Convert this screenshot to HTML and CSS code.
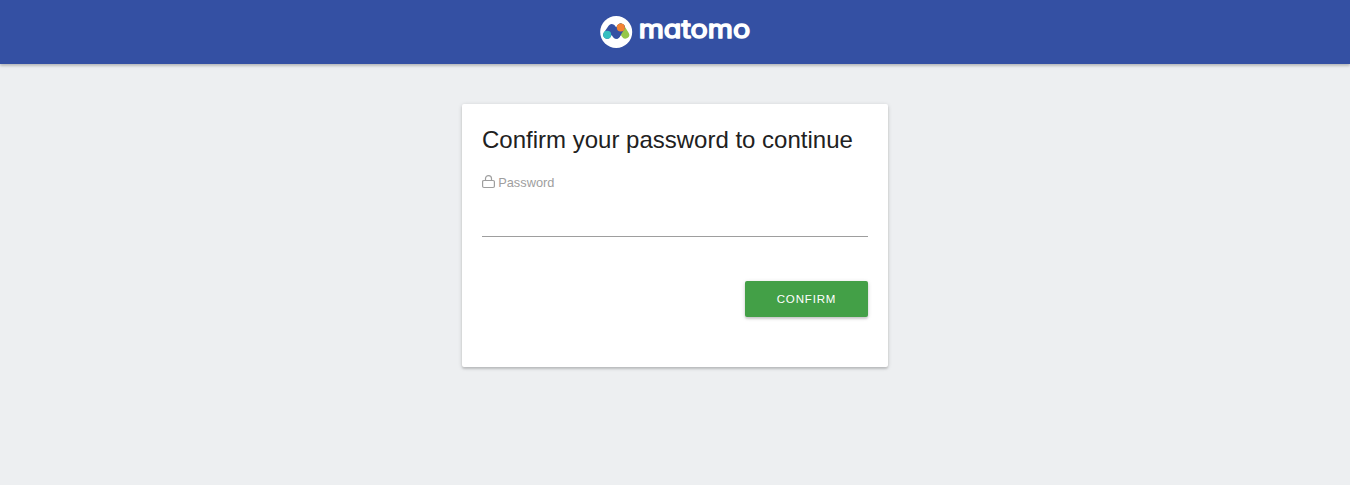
FILE: index.html
```html
<!DOCTYPE html>
<html lang="en">
<head>
<meta charset="utf-8">
<title>Confirm your password - Matomo</title>
<link rel="stylesheet" href="styles.css">
</head>
<body>
<header class="navbar">
  <svg class="logo" viewBox="0 0 152 32" role="img" aria-label="Matomo">
    <circle cx="16.2" cy="16" r="16" fill="#fff"/>
    <path d="M7.2 18.7 L11.8 12 L16.4 18.7 L20.8 11.5" fill="none" stroke="#3450a3" stroke-width="7.8" stroke-linecap="round" stroke-linejoin="round"/>
    <path d="M20.8 11.5 L25.3 18.7" fill="none" stroke="#95c748" stroke-width="7.8" stroke-linecap="round"/>
    <path d="M16.4 18.7 L20.8 11.5" fill="none" stroke="#3450a3" stroke-width="7.8" stroke-linecap="round"/>
    <circle cx="7.2" cy="18.7" r="4" fill="#35bfc0"/>
    <circle cx="20.8" cy="11.5" r="4" fill="#f38334"/>
    <text class="wordmark" x="38.7" y="21.9" textLength="111.6" lengthAdjust="spacingAndGlyphs">matomo</text>
  </svg>
</header>
<main class="content">
  <form class="card">
    <h1 class="card-title">Confirm your password to continue</h1>
    <label class="field-label" for="password">
      <svg class="lock" viewBox="0 0 13 14"><path d="M2 5.5 H11 Q12.4 5.5 12.4 6.7 V11.3 Q12.4 12.5 11 12.5 H2 Q.6 12.5 .6 11.3 V6.7 Q.6 5.5 2 5.5 Z M3.5 5.5 V3.6 A3 3 0 0 1 9.5 3.6 V5.5"/></svg>
      <span>Password</span>
    </label>
    <input class="field-input" id="password" type="password">
    <div class="actions"><button class="submit" type="button">CONFIRM</button></div>
  </form>
</main>
</body>
</html>
```
FILE: styles.css
```css
* { box-sizing: border-box; }
body {
  margin: 0;
  min-height: 485px;
  background: #edeff1;
  font-family: "Liberation Sans", Arial, sans-serif;
  color: #212121;
}
.navbar {
  height: 64px;
  display: flex;
  justify-content: center;
  padding-top: 16px;
  background: #3450a3;
  box-shadow: 0 2px 2px 0 rgba(0,0,0,.12), 0 1px 4px 0 rgba(0,0,0,.16);
}
.logo { width: 152px; height: 32px; margin-left: 2px; overflow: visible; }
.wordmark {
  font: 400 25px Inter, sans-serif;
  font-feature-settings: "cv11";
  fill: #fff;
  stroke: #fff;
  stroke-width: 1.5px;
  stroke-linejoin: round;
}
.content { display: flex; justify-content: center; padding-top: 40px; }
.card {
  width: 426px;
  height: 263px;
  padding: 20px;
  background: #fff;
  border-radius: 2px;
  box-shadow: 0 2px 2px 0 rgba(0,0,0,.12), 0 1px 4px 0 rgba(0,0,0,.16);
}
.card-title { margin: 0; font-size: 24px; font-weight: 400; line-height: 32px; white-space: nowrap; }
.field-label {
  display: flex;
  gap: 3.2px;
  height: 20px;
  margin-top: 17px;
  color: #9e9e9e;
  font-size: 12.8px;
  line-height: 20px;
}
.lock { width: 13px; height: 14px; margin-top: 2px; fill: none; stroke: #9e9e9e; stroke-width: 1.2; }
.field-input {
  display: block;
  width: 100%;
  height: 44px;
  padding: 0;
  border: 0;
  border-bottom: 1px solid #9e9e9e;
  background: transparent;
  outline: 0;
}
.actions { display: flex; justify-content: flex-end; margin-top: 44px; }
.submit {
  width: 123px;
  height: 36px;
  padding: 0;
  border: 0;
  border-radius: 2px;
  background: #43a047;
  color: #fff;
  font: 11.5px "Liberation Sans", Arial, sans-serif;
  letter-spacing: .85px;
  box-shadow: 0 2px 2px 0 rgba(0,0,0,.12), 0 1px 4px 0 rgba(0,0,0,.16);
}
```
